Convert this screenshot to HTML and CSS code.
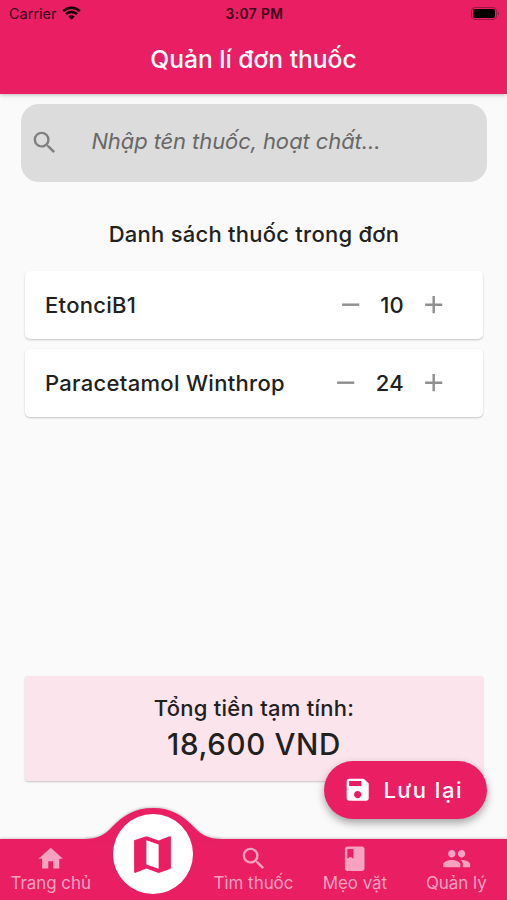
FILE: index.html
```html
<!DOCTYPE html>
<html lang="vi">

<head>
  <meta charset="utf-8">
  <title>Quản lí đơn thuốc</title>
  <link rel="stylesheet" href="styles.css">
</head>

<body>
  <div class="app">
    <header class="header">
      <div class="status">
        <div class="carrier">Carrier
          <svg class="wifi" viewBox="0 0 19 14">
            <path d="M1.2 5.2a11.7 11.7 0 0 1 16.6 0M4 8.2a7.7 7.7 0 0 1 11 0" />
            <path class="dot" d="M9.5 13.8L6.3 10.6a4.6 4.6 0 0 1 6.4 0z" />
          </svg>
        </div>
        <div class="time">3:07 PM</div>
        <div class="battery"><span class="level"></span></div>
      </div>
      <h1 class="title">Quản lí đơn thuốc</h1>
    </header>

    <main class="main">
      <div class="search">
        <svg class="icon" viewBox="0 0 24 24"><path d="M15.5 14h-.79l-.28-.27A6.47 6.47 0 0 0 16 9.5 6.5 6.5 0 1 0 9.5 16c1.61 0 3.09-.59 4.23-1.57l.27.28v.79l5 4.99L20.49 19l-4.99-5zm-6 0C7.01 14 5 11.99 5 9.5S7.01 5 9.5 5 14 7.01 14 9.5 11.99 14 9.5 14z" /></svg>
        <span class="hint">Nhập tên thuốc, hoạt chất...</span>
      </div>

      <h2 class="heading">Danh sách thuốc trong đơn</h2>

      <div class="card">
        <span class="name">EtonciB1</span>
        <svg class="icon" viewBox="0 0 24 24"><path d="M19 13H5v-2h14v2z" /></svg>
        <span class="count">10</span>
        <svg class="icon" viewBox="0 0 24 24"><path d="M19 13h-6v6h-2v-6H5v-2h6V5h2v6h6v2z" /></svg>
      </div>
      <div class="card">
        <span class="name">Paracetamol Winthrop</span>
        <svg class="icon" viewBox="0 0 24 24"><path d="M19 13H5v-2h14v2z" /></svg>
        <span class="count">24</span>
        <svg class="icon" viewBox="0 0 24 24"><path d="M19 13h-6v6h-2v-6H5v-2h6V5h2v6h6v2z" /></svg>
      </div>

      <div class="total">
        <div class="label">Tổng tiền tạm tính:</div>
        <div class="price">18,600 VND</div>
      </div>
    </main>

    <button class="save">
      <svg class="icon" viewBox="0 0 24 24"><path d="M17 3H5a2 2 0 0 0-2 2v14a2 2 0 0 0 2 2h14c1.1 0 2-.9 2-2V7l-4-4zm-5 16c-1.66 0-3-1.34-3-3s1.34-3 3-3 3 1.34 3 3-1.34 3-3 3zm3-10H5V5h10v4z" /></svg>
      <span class="save-text">Lưu lại</span>
    </button>

    <nav class="nav">
      <svg class="bump" viewBox="0 0 136 32">
        <path d="M0 32V31C12 31 20 27 27 19C38 7.5 50 0 68 0S98 7.5 109 19C116 27 124 31 136 31V32z" />
      </svg>
      <a class="tab">
        <svg class="icon" viewBox="0 0 24 24"><path d="M10 20v-6h4v6h5v-8h3L12 3 2 12h3v8z" /></svg>
        <span>Trang chủ</span>
      </a>
      <a class="tab active">
        <svg class="icon" viewBox="0 0 24 24"><path d="M20.5 3l-.16.03L15 5.1 9 3 3.36 4.9c-.21.07-.36.25-.36.48V20.5c0 .28.22.5.5.5l.16-.03L9 18.9l6 2.1 5.64-1.9c.21-.07.36-.25.36-.48V3.5c0-.28-.22-.5-.5-.5zM15 19l-6-2.11V5l6 2.11V19z" /></svg>
      </a>
      <a class="tab">
        <svg class="icon" viewBox="0 0 24 24"><path d="M15.5 14h-.79l-.28-.27A6.47 6.47 0 0 0 16 9.5 6.5 6.5 0 1 0 9.5 16c1.61 0 3.09-.59 4.23-1.57l.27.28v.79l5 4.99L20.49 19l-4.99-5zm-6 0C7.01 14 5 11.99 5 9.5S7.01 5 9.5 5 14 7.01 14 9.5 11.99 14 9.5 14z" /></svg>
        <span>Tìm thuốc</span>
      </a>
      <a class="tab">
        <svg class="icon" viewBox="0 0 24 24"><path d="M18 2H6c-1.1 0-2 .9-2 2v16c0 1.1.9 2 2 2h12c1.1 0 2-.9 2-2V4c0-1.1-.9-2-2-2zM6 4h5v8l-2.5-1.5L6 12V4z" /></svg>
        <span>Mẹo vặt</span>
      </a>
      <a class="tab">
        <svg class="icon" viewBox="0 0 24 24"><path d="M16 11c1.66 0 2.99-1.34 2.99-3S17.66 5 16 5s-3 1.34-3 3 1.34 3 3 3zm-8 0c1.66 0 2.99-1.34 2.99-3S9.66 5 8 5 5 6.34 5 8s1.34 3 3 3zm0 2c-2.33 0-7 1.17-7 3.5V19h14v-2.5C15 14.17 10.33 13 8 13zm8 0c-.29 0-.62.02-.97.05 1.16.84 1.97 1.97 1.97 3.45V19h6v-2.5c0-2.33-4.67-3.5-7-3.5z" /></svg>
        <span>Quản lý</span>
      </a>
    </nav>
  </div>
</body>

</html>
```
FILE: styles.css
```css
* {
  box-sizing: border-box;
}

body {
  margin: 0;
  background: #fafafa;
  color: #212121;
  font-family: Inter, "Noto Sans", sans-serif;
}

h1, h2 {
  margin: 0;
  font-weight: 500;
}

.app {
  position: relative;
  display: flex;
  flex-direction: column;
  height: 900px;
  overflow: hidden;
}

.icon {
  width: 29.4px;
  height: 29.4px;
  flex: none;
  fill: currentColor;
}

/* header */
.header {
  height: 94px;
  background: #e91e63;
  box-shadow: 0 1px 4px rgba(0, 0, 0, 0.25);
}

.status {
  display: grid;
  grid-template-columns: 1fr auto 1fr;
  align-items: center;
  height: 27px;
  padding: 0 7px 0 9px;
  color: #3a0518;
  font-size: 14.5px;
}

.carrier {
  display: flex;
  align-items: center;
  gap: 5px;
}

.wifi {
  width: 19px;
  height: 14px;
  margin-top: -2px;
  fill: none;
  stroke: #160009;
  stroke-width: 2.6;
}

.wifi .dot {
  fill: #160009;
  stroke: none;
}

.time {
  font-size: 13.8px;
  font-weight: 600;
  letter-spacing: 0.4px;
}

.battery {
  position: relative;
  justify-self: end;
  width: 26px;
  height: 13px;
  margin-right: 3px;
  padding: 1px;
  border: 1px solid #9c1544;
  border-radius: 4px;
}

.battery::after {
  content: "";
  position: absolute;
  top: 4px;
  right: -3px;
  width: 1px;
  height: 3px;
  background: #9c1544;
}

.level {
  display: block;
  height: 9px;
  border-radius: 2px;
  background: #000;
}

.title {
  color: #fff;
  font-size: 24.6px;
  line-height: 65px;
  text-align: center;
}

/* content */
.main {
  flex: 1;
  display: flex;
  flex-direction: column;
  padding: 10px 24px 58px 25px;
}

.search {
  display: flex;
  align-items: center;
  height: 78px;
  margin: 0 -4px;
  padding-left: 9px;
  border-radius: 18px;
  background: #dcdcdc;
  color: #808080;
}

.hint {
  margin-left: 32px;
  padding-bottom: 5px;
  color: #686868;
  font-size: 22px;
  font-style: italic;
  letter-spacing: -0.1px;
}

.heading {
  margin: 37px 0 22px;
  font-size: 22px;
  line-height: 30px;
  letter-spacing: 0.25px;
  text-align: center;
}

.card {
  display: flex;
  align-items: center;
  height: 68px;
  margin-bottom: 10px;
  padding: 0 35px 0 20px;
  border-radius: 5px;
  background: #fff;
  box-shadow: 0 1px 2px rgba(0, 0, 0, 0.22);
  color: #909090;
  font-size: 22px;
  font-weight: 500;
  letter-spacing: 0.3px;
}

.name {
  flex: 1;
  color: #212121;
}

.count {
  margin: 0 14.5px 0 15px;
  color: #212121;
}

.total {
  height: 105px;
  margin-top: auto;
  padding-top: 16px;
  border-radius: 3px;
  background: #fce4ec;
  box-shadow: 0 1px 2px rgba(0, 0, 0, 0.22);
  font-weight: 500;
  text-align: center;
}

.label {
  font-size: 22px;
  line-height: 33px;
  letter-spacing: 0.27px;
}

.price {
  font-size: 29.5px;
  line-height: 38px;
  letter-spacing: 0.65px;
}

/* floating button */
.save {
  position: absolute;
  right: 20px;
  bottom: 81px;
  display: flex;
  align-items: center;
  width: 163px;
  height: 58px;
  padding: 0 0 0 19px;
  border: 0;
  border-radius: 29px;
  background: #e91e63;
  box-shadow: 0 4px 8px rgba(0, 0, 0, 0.35);
  color: #fff;
  font: 500 22px Inter, "Noto Sans", sans-serif;
}

.save-text {
  margin-left: 11px;
  letter-spacing: 1.5px;
}

/* bottom bar */
.nav {
  position: relative;
  display: grid;
  grid-template-columns: repeat(5, 1fr);
  height: 61.5px;
  background: #e91e63;
  box-shadow: 0 0 3px rgba(0, 0, 0, 0.3);
}

.bump {
  position: absolute;
  left: 84.5px;
  top: -30.5px;
  width: 136px;
  height: 32px;
  fill: #e91e63;
  filter: drop-shadow(0 -1px 1px rgba(0, 0, 0, 0.2));
}

.tab {
  display: flex;
  flex-direction: column;
  align-items: center;
  padding-top: 5px;
  color: #f6a2c0;
  font-size: 16.9px;
  line-height: 20px;
  white-space: nowrap;
}

.active {
  position: relative;
  justify-self: center;
  justify-content: center;
  width: 80px;
  height: 80px;
  margin: -24.5px 0 0 1px;
  padding: 0;
  border-radius: 50%;
  background: #fff;
  color: #e91e63;
}

.active .icon {
  width: 49px;
  height: 49px;
}
```
